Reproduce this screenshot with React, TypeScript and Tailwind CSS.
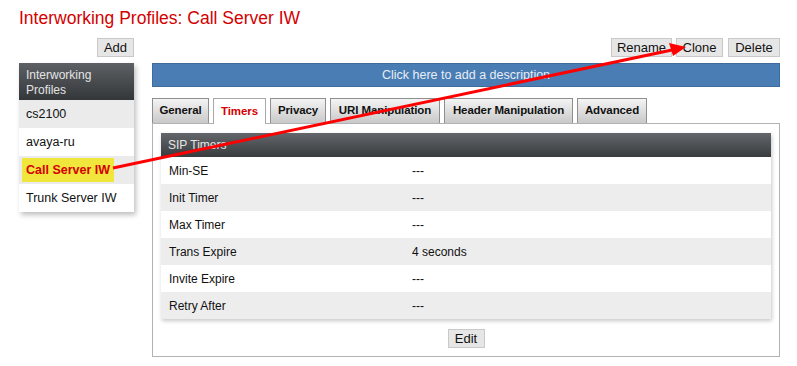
import React from 'react';

const PROFILES = ['cs2100', 'avaya-ru', 'Call Server IW', 'Trunk Server IW'];
const TABS = [
  { label: 'General', w: 'w-[57px]' },
  { label: 'Timers', w: 'w-[53px]' },
  { label: 'Privacy', w: 'w-[56px]' },
  { label: 'URI Manipulation', w: 'w-[110px]' },
  { label: 'Header Manipulation', w: 'w-[129px]' },
  { label: 'Advanced', w: 'w-[70px]' },
];
const TIMERS = [
  { label: 'Min-SE', value: '---' },
  { label: 'Init Timer', value: '---' },
  { label: 'Max Timer', value: '---' },
  { label: 'Trans Expire', value: '4 seconds' },
  { label: 'Invite Expire', value: '---' },
  { label: 'Retry After', value: '---' },
];

function Btn({ children, className = '' }: { children: React.ReactNode; className?: string }) {
  return (
    <button
      className={`h-[19px] border border-[#c9c9c9] bg-[#e6e6e6] text-[13px] leading-none text-[#111] ${className}`}
    >
      {children}
    </button>
  );
}

export default function App() {
  return (
    <div
      className="relative h-[366px] w-[797px] overflow-hidden bg-white"
      style={{ fontFamily: '"Liberation Sans", Arial, sans-serif' }}
    >
      <h1 className="pl-[19px] pt-[8px] text-[17.5px] leading-[21px] text-[#d40000]">
        Interworking Profiles: Call Server IW
      </h1>

      <div className="mt-[9px] flex pl-[19px]">
        {/* left list */}
        <div className="w-[115px]">
          <div className="flex justify-end">
            <Btn className="w-[37px]">Add</Btn>
          </div>
          <div className="mt-[6px] bg-white shadow-[2px_3px_5px_rgba(0,0,0,0.25)]">
            <div className="h-[37px] bg-gradient-to-b from-[#5d6165] to-[#34373a] px-[7px] pt-[5px] text-[12px] leading-[15px] text-[#e4e4e4]">
              Interworking
              <br />
              Profiles
            </div>
            {PROFILES.map((p, i) => (
              <div
                key={p}
                className={`flex h-[28px] items-center px-[7px] text-[12.5px] ${i % 2 === 0 ? 'bg-[#ebebeb]' : 'bg-white'}`}
              >
                {p === 'Call Server IW' ? (
                  <span className="-ml-[4px] bg-[#f0e63c] px-[4px] py-[3px] font-bold text-[#d40000]">{p}</span>
                ) : (
                  <span className="text-[#111]">{p}</span>
                )}
              </div>
            ))}
          </div>
        </div>

        {/* main */}
        <div className="ml-[18px] w-[628px]">
          <div className="flex justify-end gap-[4px]">
            <Btn className="w-[61px]">Rename</Btn>
            <Btn className="w-[47px]">Clone</Btn>
            <Btn className="ml-[1px] w-[52px]">Delete</Btn>
          </div>
          <div className="mt-[6px] flex h-[24px] items-center justify-center border border-[#3f6c9c] bg-[#4a7db4] text-[12.5px] text-[#e8eef6]">
            Click here to add a description
          </div>

          <div className="mt-[11px] flex gap-[4px]">
            {TABS.map((t) => {
              const active = t.label === 'Timers';
              return (
                <div
                  key={t.label}
                  className={`relative z-10 flex items-center justify-center border border-b-0 text-[11.5px] font-bold tracking-[-0.1px] ${t.w} ${
                    active
                      ? 'h-[26px] border-[#a8a8a8] bg-white text-[#d40000]'
                      : 'h-[25px] border-[#8f8f8f] bg-gradient-to-b from-[#f4f4f4] to-[#c9c9c9] text-[#111]'
                  }`}
                >
                  {t.label}
                </div>
              );
            })}
          </div>

          <div className="-mt-px h-[234px] border border-[#b2b2b2] bg-white px-[8px] pt-[9px]">
            <div className="shadow-[1px_2px_4px_rgba(0,0,0,0.22)]">
              <div className="flex h-[24px] items-center bg-gradient-to-b from-[#63676b] to-[#393c3f] px-[7px] text-[12px] text-[#e6e6e6]">
                SIP Timers
              </div>
              {TIMERS.map((r, i) => (
                <div
                  key={r.label}
                  className={`flex h-[27px] items-center text-[12px] text-[#111] ${i % 2 === 0 ? 'bg-white' : 'bg-[#ededed]'}`}
                >
                  <span className="w-[251px] pl-[8px]">{r.label}</span>
                  <span>{r.value}</span>
                </div>
              ))}
            </div>
            <div className="mt-[10px] flex justify-center">
              <Btn className="w-[37px]">Edit</Btn>
            </div>
          </div>
        </div>
      </div>

      {/* annotation arrow */}
      <svg className="pointer-events-none absolute left-0 top-0 z-20" width="797" height="366">
        <line x1="113" y1="168" x2="672" y2="50" stroke="#ff0000" strokeWidth="3" />
        <polygon points="686,47 669,43 673,56" fill="#ff0000" />
      </svg>
    </div>
  );
}
